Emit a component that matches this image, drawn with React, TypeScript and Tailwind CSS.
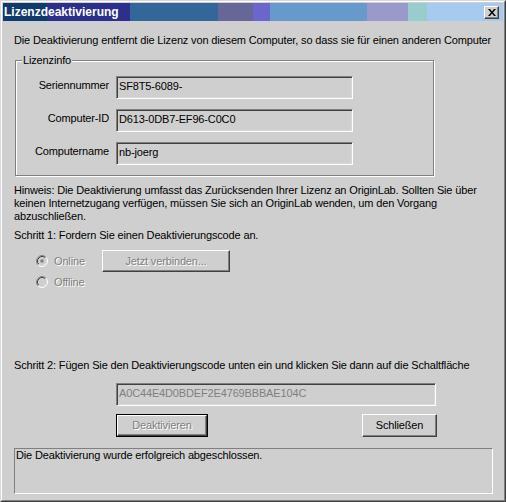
import React from "react";

function Radio({ checked }: { checked: boolean }) {
  return (
    <svg width="12" height="12" viewBox="0 0 12 12" className="shrink-0">
      <circle cx="6" cy="6" r="4" fill="#cfcfcf" />
      <path d="M2.11 9.89 A5.5 5.5 0 0 1 9.89 2.11" stroke="#808080" strokeWidth="1" fill="none" />
      <path d="M9.89 2.11 A5.5 5.5 0 0 1 2.11 9.89" stroke="#ffffff" strokeWidth="1" fill="none" />
      <path d="M2.82 9.18 A4.5 4.5 0 0 1 9.18 2.82" stroke="#404040" strokeWidth="1" fill="none" />
      <path d="M9.18 2.82 A4.5 4.5 0 0 1 2.82 9.18" stroke="#d8d8d8" strokeWidth="1" fill="none" />
      {checked && <circle cx="6" cy="6" r="1.8" fill="#808080" />}
    </svg>
  );
}

function Field({ label, value }: { label: string; value: string }) {
  return (
    <div className="flex items-start">
      <div className="w-[94px] pt-[3px] pr-[1px] text-right leading-[13px] whitespace-nowrap">{label}</div>
      <div className="ml-[6px] w-[237px] h-[23px] border border-t-[#808080] border-l-[#808080] border-b-white border-r-white shadow-[inset_1px_1px_0_#404040,inset_-1px_-1px_0_#d8d8d8] pl-[2px] pt-[3px] leading-[13px] text-black whitespace-nowrap">
        {value}
      </div>
    </div>
  );
}

export default function App() {
  const disabledText = "text-[#808080] [text-shadow:1px_1px_0_#ffffff]";
  return (
    <div className="w-[506px] h-[502px] border border-t-[#d8d8d8] border-l-[#d8d8d8] border-r-[#404040] border-b-[#404040] bg-[#cfcfcf] font-['Liberation_Sans',Arial,sans-serif] text-[11px] tracking-[-0.15px] text-black">
      <div className="h-full border border-t-white border-l-white border-r-[#808080] border-b-[#808080] p-[1px] flex flex-col">
        {/* Title bar */}
        <div className="h-[18px] shrink-0 flex items-center justify-between pl-[1px] pr-[4px] bg-[linear-gradient(90deg,#0f3a6b_0px,#0f3a6b_44px,#2c2f8c_44px,#2c2f8c_127px,#336699_127px,#336699_215px,#666699_215px,#666699_250px,#6a66cc_250px,#6a66cc_267px,#6699cc_267px,#6699cc_364px,#9999cc_364px,#9999cc_405px,#99cccc_405px,#99cccc_424px,#a6caf0_424px,#a6caf0_100%)]">
          <span className="text-white font-bold text-[12px] tracking-normal leading-[13px] whitespace-nowrap">Lizenzdeaktivierung</span>
          <div className="w-[15px] h-[13px] bg-[#cfcfcf] border border-t-white border-l-white border-r-[#404040] border-b-[#404040] shadow-[inset_-1px_-1px_0_#808080] flex items-center justify-center">
            <svg width="8" height="7" viewBox="0 0 8 7">
              <path d="M0 0 L2 0 L4 2.5 L6 0 L8 0 L5 3.5 L8 7 L6 7 L4 4.5 L2 7 L0 7 L3 3.5 Z" fill="#000" />
            </svg>
          </div>
        </div>

        {/* Body */}
        <div className="flex-1 flex flex-col pl-[11px] pt-[13px]">
          <div className="h-[13px] leading-[13px] whitespace-nowrap">
            Die Deaktivierung entfernt die Lizenz von diesem Computer, so dass sie für einen anderen Computer
          </div>

          {/* Group box */}
          <div className="relative mt-[13px] ml-[1px] w-[419px] h-[116px] border border-[#808080] shadow-[inset_1px_1px_0_#ffffff,1px_1px_0_#ffffff] pt-[15px] flex flex-col gap-[10px]">
            <span className="absolute -top-[7px] left-[6px] px-[1px] bg-[#cfcfcf] leading-[13px]">Lizenzinfo</span>
            <Field label="Seriennummer" value="SF8T5-6089-" />
            <Field label="Computer-ID" value="D613-0DB7-EF96-C0C0" />
            <Field label="Computername" value="nb-joerg" />
          </div>

          <div className="mt-[8px] leading-[13px] whitespace-nowrap">
            Hinweis: Die Deaktivierung umfasst das Zurücksenden Ihrer Lizenz an OriginLab. Sollten Sie über
            <br />
            keinen Internetzugang verfügen, müssen Sie sich an OriginLab wenden, um den Vorgang
            <br />
            abzuschließen.
          </div>

          <div className="mt-[6px] leading-[13px] whitespace-nowrap">Schritt 1: Fordern Sie einen Deaktivierungscode an.</div>

          <div className="mt-[8px] ml-[22px] flex items-center h-[22px]">
            <div className="w-[66px] flex items-center gap-[6px]">
              <Radio checked />
              <span className={`leading-[13px] ${disabledText}`}>Online</span>
            </div>
            <div className="w-[128px] h-[22px] border border-t-white border-l-white border-r-[#404040] border-b-[#404040] shadow-[inset_-1px_-1px_0_#808080] flex items-center justify-center">
              <span className={`leading-[13px] ${disabledText}`}>Jetzt verbinden...</span>
            </div>
          </div>
          <div className="mt-[3px] ml-[22px] flex items-center h-[14px] gap-[6px]">
            <Radio checked={false} />
            <span className={`leading-[13px] ${disabledText}`}>Offline</span>
          </div>

          <div className="mt-[70px] leading-[13px] whitespace-nowrap">
            Schritt 2: Fügen Sie den Deaktivierungscode unten ein und klicken Sie dann auf die Schaltfläche
          </div>

          <div className="mt-[11px] ml-[102px] w-[320px] h-[23px] border border-t-[#808080] border-l-[#808080] border-b-white border-r-white shadow-[inset_1px_1px_0_#404040,inset_-1px_-1px_0_#d8d8d8] pl-[2px] pt-[3px] leading-[13px] text-[#808080] whitespace-nowrap">
            A0C44E4D0BDEF2E4769BBBAE104C
          </div>

          <div className="mt-[8px] ml-[102px] w-[321px] flex justify-between">
            <div className="w-[92px] h-[23px] border border-black">
              <div className="h-full border border-t-white border-l-white border-r-[#404040] border-b-[#404040] shadow-[inset_-1px_-1px_0_#808080] flex items-center justify-center">
                <span className={`leading-[13px] ${disabledText}`}>Deaktivieren</span>
              </div>
            </div>
            <div className="w-[75px] h-[23px] border border-t-white border-l-white border-r-[#404040] border-b-[#404040] shadow-[inset_-1px_-1px_0_#808080] flex items-center justify-center">
              <span className="leading-[13px]">Schließen</span>
            </div>
          </div>

          <div className="mt-[11px] w-[479px] h-[46px] border border-t-[#808080] border-l-[#808080] border-b-white border-r-white pl-[1px] leading-[13px] whitespace-nowrap">
            Die Deaktivierung wurde erfolgreich abgeschlossen.
          </div>
        </div>
      </div>
    </div>
  );
}
